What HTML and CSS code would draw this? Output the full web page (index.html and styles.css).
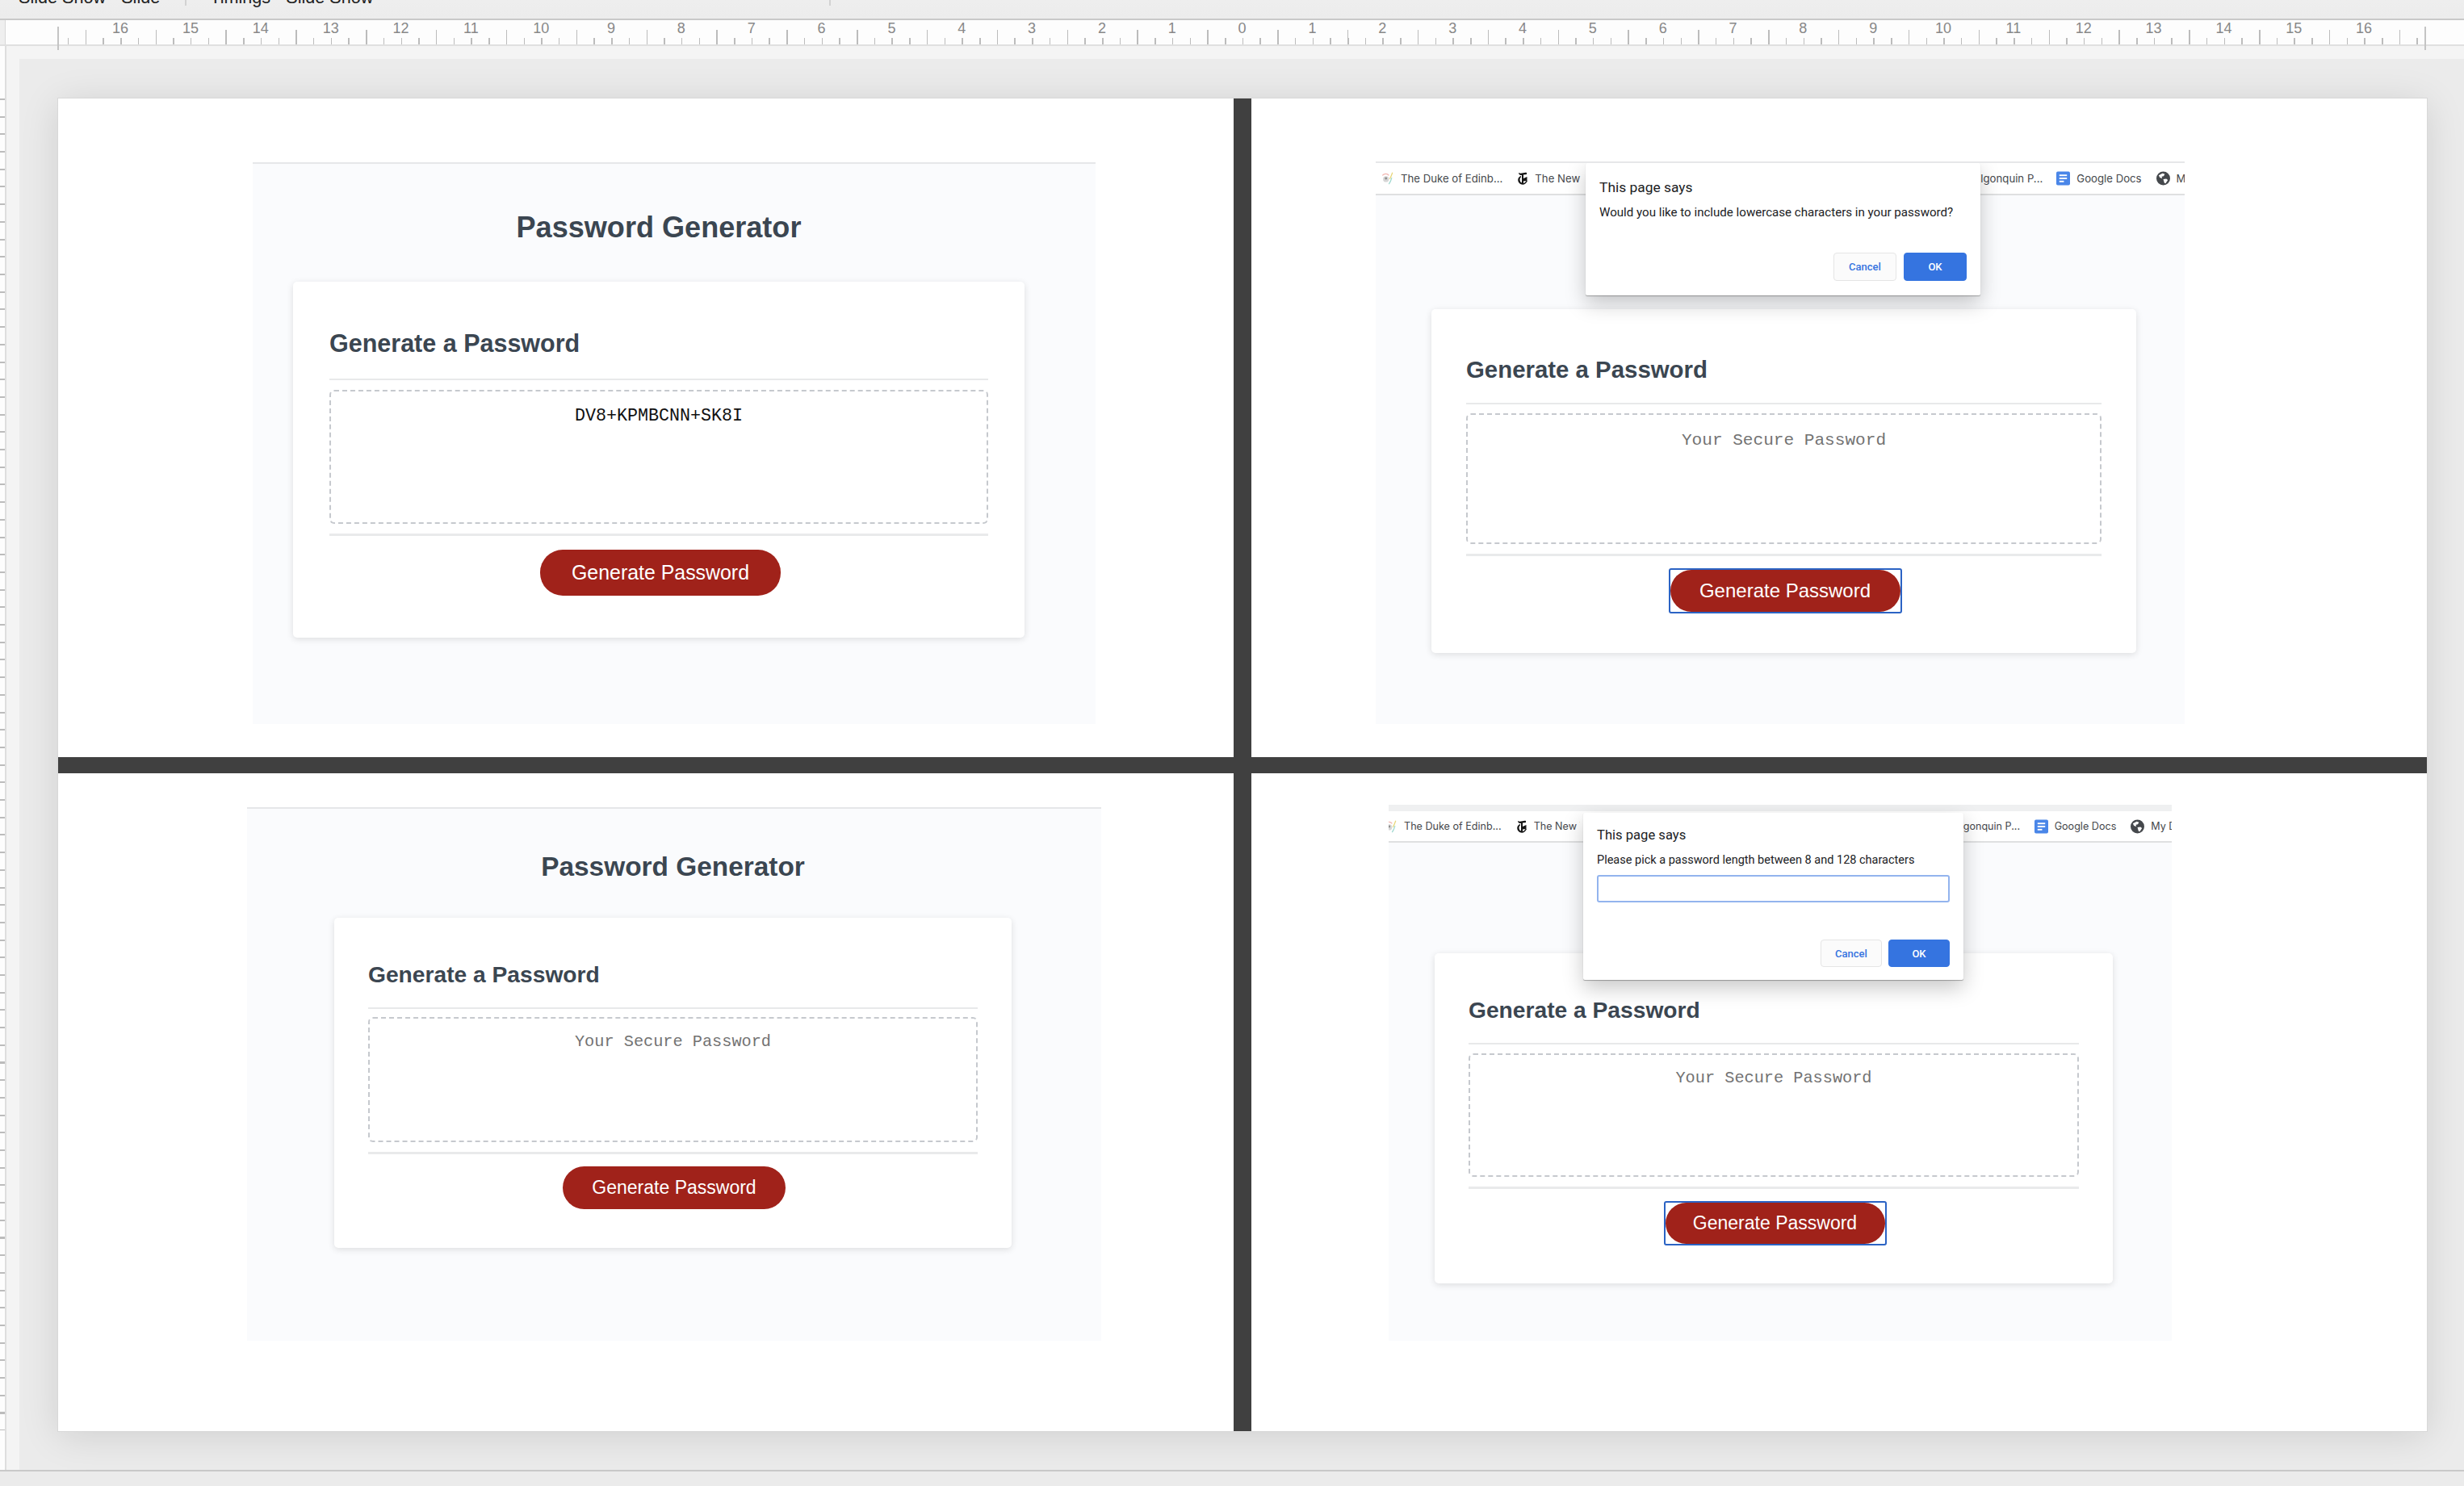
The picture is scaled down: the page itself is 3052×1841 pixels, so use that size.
FILE: index.html
```html
<!DOCTYPE html>
<html lang="en">
<head>
    <meta charset="UTF-8">
    <meta name="viewport" content="width=device-width, initial-scale=1.0">
    <title>Slide Editor</title>

    <link rel="stylesheet" href="styles.css">
</head>
<body>

    <svg class="icon-defs" aria-hidden="true">
        <symbol id="icon-peacock" viewBox="0 0 16 20">
            <path d="M1 6 C4 3 8 3 10 6" fill="none" stroke="#f2b6b0" stroke-width="1.4"/>
            <path d="M11 11 C13 8 14 5 15 2" fill="none" stroke="#e8d77c" stroke-width="1.4"/>
            <path d="M10 18 C12 15 13 13 14 9" fill="none" stroke="#9fd8cf" stroke-width="1.4"/>
            <circle cx="6" cy="11" r="4" fill="#d6d6d6"/>
            <circle cx="6" cy="10" r="1.6" fill="#8d8d8d"/>
        </symbol>
        <symbol id="icon-nyt" viewBox="0 0 14 18">
            <path d="M2 2 C5 4 9 1 12 2 L12 4 L8 4.5 L8 15 L6 15 L6 5 C4 5 2 4.5 2 2 Z" fill="#151515"/>
            <path d="M5 6 C1 7 0 12 3 15 C6 18 11 17 13 12 L11.5 12 C10 15 7 15.5 5 14 C3 12 3.2 8.5 5 7.5 Z" fill="#151515"/>
            <path d="M8 9 L12.5 7 L12.5 12 L8 12.5 Z" fill="#151515"/>
        </symbol>
        <symbol id="icon-docs" viewBox="0 0 18 18">
            <rect width="18" height="18" rx="2" fill="#4a86e8"/>
            <rect x="4" y="4" width="10" height="2" fill="#fff"/>
            <rect x="4" y="8" width="10" height="2" fill="#fff"/>
            <rect x="4" y="12" width="6" height="2" fill="#fff"/>
        </symbol>
        <symbol id="icon-globe" viewBox="0 0 18 18">
            <circle cx="9" cy="9" r="9" fill="#45484c"/>
            <path d="M3 5 L8 2.5 L11 3.5 L9.5 6 L7 6.5 L7.5 9 L4.5 8 Z" fill="#fff"/>
            <path d="M9 10 L13 9.5 L15 11 L12 15.5 L10.5 15 Z" fill="#fff"/>
        </symbol>
    </svg>

    <div class="toolbar">
        <span class="toolbar-item">Slide Show - Slide</span>
        <span class="toolbar-sep"></span>
        <span class="toolbar-item">Timings - Slide Show</span>
        <span class="toolbar-sep toolbar-sep-far"></span>
    </div>

    <div class="top-ruler">
        <div class="ruler-corner"></div>
        <div class="ruler-scale">
            <span class="ruler-mark ruler-mark-start"></span>
            <span class="ruler-num">16</span><span class="ruler-num">15</span><span class="ruler-num">14</span>
            <span class="ruler-num">13</span><span class="ruler-num">12</span><span class="ruler-num">11</span>
            <span class="ruler-num">10</span><span class="ruler-num">9</span><span class="ruler-num">8</span>
            <span class="ruler-num">7</span><span class="ruler-num">6</span><span class="ruler-num">5</span>
            <span class="ruler-num">4</span><span class="ruler-num">3</span><span class="ruler-num">2</span>
            <span class="ruler-num">1</span><span class="ruler-num">0</span><span class="ruler-num">1</span>
            <span class="ruler-num">2</span><span class="ruler-num">3</span><span class="ruler-num">4</span>
            <span class="ruler-num">5</span><span class="ruler-num">6</span><span class="ruler-num">7</span>
            <span class="ruler-num">8</span><span class="ruler-num">9</span><span class="ruler-num">10</span>
            <span class="ruler-num">11</span><span class="ruler-num">12</span><span class="ruler-num">13</span>
            <span class="ruler-num">14</span><span class="ruler-num">15</span><span class="ruler-num">16</span>
            <span class="ruler-mark ruler-mark-end"></span>
        </div>
    </div>

    <div class="workspace">
        <div class="side-ruler">
            <div class="side-ticks"></div>
        </div>
        <div class="side-strip">
            <div class="canvas">
                <div class="slide">

                    <!-- top left: finished password -->
                    <div class="slide-cell">
                        <div class="panel shot-one">
                            <div class="panel-main">
                                <h1 class="panel-title">Password Generator</h1>
                                <div class="card">
                                    <div class="card-head"><h2 class="card-title">Generate a Password</h2></div>
                                    <div class="output output-filled">DV8+KPMBCNN+SK8I</div>
                                    <div class="card-foot">
                                        <button class="btn">Generate Password</button>
                                    </div>
                                </div>
                            </div>
                        </div>
                    </div>

                    <!-- top right: confirm dialog -->
                    <div class="slide-cell">
                        <div class="panel shot-two">
                            <div class="bookmarks">
                                <svg class="bm-icon bm-peacock"><use href="#icon-peacock"/></svg>
                                <span class="bm-text">The Duke of Edinb...</span>
                                <svg class="bm-icon bm-nyt"><use href="#icon-nyt"/></svg>
                                <span class="bm-text bm-new">The New York Times</span>
                                <span class="bm-text bm-algonquin">lgonquin P...</span>
                                <svg class="bm-icon bm-docs"><use href="#icon-docs"/></svg>
                                <span class="bm-text">Google Docs</span>
                                <svg class="bm-icon bm-globe"><use href="#icon-globe"/></svg>
                                <span class="bm-text">My Drive</span>
                            </div>
                            <div class="panel-main">
                                <div class="card">
                                    <div class="card-head"><h2 class="card-title">Generate a Password</h2></div>
                                    <div class="output">Your Secure Password</div>
                                    <div class="card-foot">
                                        <span class="btn-focus"><button class="btn">Generate Password</button></span>
                                    </div>
                                </div>
                            </div>
                            <div class="dialog">
                                <div class="dialog-title">This page says</div>
                                <div class="dialog-msg">Would you like to include lowercase characters in your password?</div>
                                <div class="dialog-actions">
                                    <button class="dialog-btn">Cancel</button>
                                    <button class="dialog-btn dialog-btn-ok">OK</button>
                                </div>
                            </div>
                        </div>
                    </div>

                    <!-- bottom left: starting state -->
                    <div class="slide-cell">
                        <div class="panel shot-three">
                            <div class="panel-main">
                                <h1 class="panel-title">Password Generator</h1>
                                <div class="card">
                                    <div class="card-head"><h2 class="card-title">Generate a Password</h2></div>
                                    <div class="output">Your Secure Password</div>
                                    <div class="card-foot">
                                        <button class="btn">Generate Password</button>
                                    </div>
                                </div>
                            </div>
                        </div>
                    </div>

                    <!-- bottom right: prompt dialog -->
                    <div class="slide-cell">
                        <div class="panel shot-four">
                            <div class="tab-strip"></div>
                            <div class="bookmarks">
                                <svg class="bm-icon bm-peacock"><use href="#icon-peacock"/></svg>
                                <span class="bm-text">The Duke of Edinb...</span>
                                <svg class="bm-icon bm-nyt"><use href="#icon-nyt"/></svg>
                                <span class="bm-text bm-new">The New York Times</span>
                                <span class="bm-text bm-algonquin">lgonquin P...</span>
                                <svg class="bm-icon bm-docs"><use href="#icon-docs"/></svg>
                                <span class="bm-text">Google Docs</span>
                                <svg class="bm-icon bm-globe"><use href="#icon-globe"/></svg>
                                <span class="bm-text">My Drive</span>
                            </div>
                            <div class="panel-main">
                                <div class="card">
                                    <div class="card-head"><h2 class="card-title">Generate a Password</h2></div>
                                    <div class="output">Your Secure Password</div>
                                    <div class="card-foot">
                                        <span class="btn-focus"><button class="btn">Generate Password</button></span>
                                    </div>
                                </div>
                            </div>
                            <div class="dialog">
                                <div class="dialog-title">This page says</div>
                                <div class="dialog-msg">Please pick a password length between 8 and 128 characters</div>
                                <div class="dialog-input"></div>
                                <div class="dialog-actions">
                                    <button class="dialog-btn">Cancel</button>
                                    <button class="dialog-btn dialog-btn-ok">OK</button>
                                </div>
                            </div>
                        </div>
                    </div>

                </div>
            </div>
        </div>
    </div>

    <div class="status-bar"></div>

</body>
</html>
```

FILE: styles.css
```css
* {
    box-sizing: border-box;
}

html, body {
    margin: 0;
    height: 1841px;
    overflow: hidden;
}

body {
    font-family: "Liberation Sans", Arial, sans-serif;
    background-color: #ebebeb;
    display: flex;
    flex-direction: column;
}

.icon-defs {
    position: absolute;
    width: 0;
    height: 0;
}

/* app chrome */
.toolbar {
    height: 25px;
    flex: none;
    display: flex;
    align-items: flex-start;
    padding-left: 23px;
    background: linear-gradient(#eeeeee, #ececec);
    border-bottom: 2px solid #c9c9c9;
    overflow: hidden;
}

.toolbar-item {
    font-size: 21.6px;
    line-height: 24px;
    margin-top: -15px;
    color: #222;
    white-space: pre;
}

.toolbar-sep {
    width: 2px;
    height: 7px;
    margin: 0 29px 0 31px;
    background-color: #d2d2d2;
}

.toolbar-sep-far {
    margin-left: 565px;
}

.top-ruler {
    height: 32px;
    flex: none;
    display: flex;
    background-color: #fdfdfd;
    border-bottom: 2px solid #e0e0e0;
}

.ruler-corner {
    width: 7px;
    flex: none;
    background-color: #efefef;
    border-right: 1px solid #d8d8d8;
}

.ruler-scale {
    position: relative;
    width: 2915px;
    margin-left: 77px;
    padding-left: 21.7125px;
    display: flex;
    background:
        repeating-linear-gradient(to right, #bcbcbc 0, #bcbcbc 1.5px, transparent 1.5px, transparent 21.7125px) bottom / 100% 8px no-repeat,
        repeating-linear-gradient(to right, transparent 0, transparent 21.7125px, #bcbcbc 21.7125px, #bcbcbc 23.2px, transparent 23.2px, transparent 86.85px) bottom / 100% 18px no-repeat;
}

.ruler-num {
    width: 86.85px;
    flex: none;
    text-align: center;
    font-size: 18px;
    line-height: 20px;
    color: #888;
}

.ruler-mark {
    position: absolute;
    top: 8px;
    width: 1.5px;
    height: 29px;
    background-color: #c4c4c4;
}

.ruler-mark-start {
    left: -13px;
}

.ruler-mark-end {
    left: 2919px;
}

.workspace {
    flex: none;
    height: 1766px;
    display: flex;
    border-bottom: 2px solid #c9c9c9;
}

.side-ruler {
    width: 8px;
    flex: none;
    padding-top: 65px;
    background-color: #fdfdfd;
    border-right: 2px solid #dedede;
}

.side-ticks {
    width: 6px;
    height: 1650px;
    background: repeating-linear-gradient(to bottom, #bcbcbc 0, #bcbcbc 2px, transparent 2px, transparent 21.7px);
}

.side-strip {
    flex: 1;
    padding: 16px 0 0 16px;
    background-color: #f4f4f4;
}

.canvas {
    height: 100%;
    padding: 49px 0 0 48px;
    background-color: #ebebeb;
}

.slide {
    width: 2934px;
    height: 1651px;
    display: grid;
    grid-template-columns: 1456px 1456px;
    grid-template-rows: 816px 815px;
    gap: 20px 22px;
    background-color: #404040;
    box-shadow: 0 0 0 1px #d8d8d8, 0 6px 45px rgba(0, 0, 0, 0.12);
}

.slide-cell {
    background-color: #fff;
    overflow: hidden;
}

/* each screenshot was pasted at its own scale */
.shot-one {
    --panel-left: 241px;
    --panel-top: 79px;
    --panel-w: 1044px;
    --panel-h: 696px;
    --main-left: 50px;
    --main-w: 906px;
    --title-h: 146px;
    --title-pad: 12px;
    --title-size: 36.1px;
    --pad: 45px;
    --head-h: 122px;
    --head-pad: 33px;
    --h2-size: 30.5px;
    --gap: 12px;
    --out-h: 166px;
    --out-size: 21.7px;
    --out-pad: 17px;
    --foot-pad: 17px;
    --shift: 4px;
    --btn-w: 298px;
    --btn-h: 57px;
    --btn-size: 24.9px;
    --card-h: 441px;
}

.shot-two {
    --panel-left: 154px;
    --panel-top: 78px;
    --panel-w: 1002px;
    --panel-h: 697px;
    --main-left: 69px;
    --main-w: 873px;
    --main-top: 141px;
    --pad: 43px;
    --head-h: 118px;
    --head-pad: 34px;
    --h2-size: 29.4px;
    --gap: 11px;
    --out-h: 162px;
    --out-size: 21.1px;
    --out-pad: 17px;
    --foot-pad: 15px;
    --shift: 3px;
    --btn-w: 289px;
    --btn-h: 56px;
    --btn-size: 24px;
    --card-h: 426px;
    --bm-size: 13.2px;
    --bm-start: 6px;
    --bm-gap: 18px;
    --bm-new-w: 60px;
    --bm-algonquin-left: 492px;
    --bm-algonquin-w: 76px;
    --dialog-left: 260px;
    --dialog-top: 0;
    --dialog-w: 489px;
    --dialog-h: 164px;
    --dialog-gap: 9px;
    --dialog-pad-top: 18px;
    --dialog-pad-bottom: 18px;
    --dialog-title: 17.4px;
    --dialog-msg: 15.1px;
    --dialog-btn-w: 78px;
    --dialog-btn-h: 35px;
}

.shot-three {
    --panel-left: 234px;
    --panel-top: 42px;
    --panel-w: 1058px;
    --panel-h: 661px;
    --main-left: 108px;
    --main-w: 839px;
    --title-h: 135px;
    --title-pad: 8px;
    --title-size: 33.4px;
    --pad: 42px;
    --head-h: 113px;
    --head-pad: 30px;
    --h2-size: 28.2px;
    --gap: 10px;
    --out-h: 155px;
    --out-size: 20.25px;
    --out-pad: 15px;
    --foot-pad: 15px;
    --shift: 3px;
    --btn-w: 276px;
    --btn-h: 53px;
    --btn-size: 23px;
    --card-h: 409px;
}

.shot-four {
    --panel-left: 170px;
    --panel-top: 39px;
    --panel-w: 970px;
    --panel-h: 664px;
    --main-left: 57px;
    --main-w: 840px;
    --main-top: 137px;
    --pad: 42px;
    --head-h: 113px;
    --head-pad: 30px;
    --h2-size: 28.2px;
    --gap: 11px;
    --out-h: 153px;
    --out-size: 20.25px;
    --out-pad: 15px;
    --foot-pad: 15px;
    --shift: 3px;
    --btn-w: 276px;
    --btn-h: 55px;
    --btn-size: 23px;
    --card-h: 409px;
    --bm-size: 12.6px;
    --bm-start: -6px;
    --bm-gap: 18px;
    --bm-new-w: 57px;
    --bm-algonquin-left: 472px;
    --bm-algonquin-w: 73px;
    --dialog-left: 241px;
    --dialog-top: 10px;
    --dialog-w: 471px;
    --dialog-h: 207px;
    --dialog-gap: 8px;
    --dialog-pad-top: 16px;
    --dialog-pad-bottom: 16px;
    --dialog-title: 16.6px;
    --dialog-msg: 14.5px;
    --dialog-btn-w: 76px;
    --dialog-btn-h: 34px;
}

/* the generator page */
.panel {
    position: relative;
    width: var(--panel-w);
    height: var(--panel-h);
    margin: var(--panel-top) 0 0 var(--panel-left);
    background-color: #fafbfd;
    border-top: 2px solid #e6e7e9;
    overflow: hidden;
}

.shot-four {
    border-top: 0;
}

.panel-main {
    width: var(--main-w);
    margin: var(--main-top, 0) 0 0 var(--main-left);
}

.panel-title {
    height: var(--title-h);
    margin: 0;
    padding-top: var(--title-pad);
    display: flex;
    align-items: center;
    justify-content: center;
    font-size: var(--title-size);
    font-weight: bold;
    color: #3b4651;
}

.card {
    height: var(--card-h);
    padding: 0 var(--pad);
    background-color: #fff;
    border-radius: 5px;
    box-shadow: 0 2px 8px rgba(0, 0, 0, 0.12);
}

.card-head {
    height: var(--head-h);
    padding-top: var(--head-pad);
    display: flex;
    align-items: center;
    border-bottom: 2px solid #e8e9ea;
}

.card-title {
    margin: 0;
    font-size: var(--h2-size);
    font-weight: bold;
    color: #3b4651;
}

.output {
    height: var(--out-h);
    margin-top: var(--gap);
    padding-top: var(--out-pad);
    border: 2px dashed #c6c9ce;
    border-radius: 6px;
    text-align: center;
    font-family: "Liberation Mono", "Courier New", monospace;
    font-size: var(--out-size);
    line-height: 28px;
    color: #737373;
}

.output-filled {
    color: #111;
}

.card-foot {
    margin-top: 12px;
    padding: var(--foot-pad) 0 0 var(--shift);
    display: flex;
    justify-content: center;
    border-top: 3px solid #e9eaeb;
}

.btn {
    width: var(--btn-w);
    height: var(--btn-h);
    padding: 0;
    border: 0;
    border-radius: 28px;
    background-color: #a0221a;
    font-family: "Liberation Sans", Arial, sans-serif;
    font-size: var(--btn-size);
    color: #fff;
}

.btn-focus {
    display: flex;
    border: 2px solid #2b63c4;
    border-radius: 3px;
    background-color: #fff;
}

.btn-focus .btn {
    height: calc(var(--btn-h) - 4px);
    width: calc(var(--btn-w) - 4px);
}

/* browser chrome above two of the pages */
.tab-strip {
    height: 8px;
    background-color: #eff0f1;
}

.bookmarks {
    height: 40px;
    display: flex;
    align-items: center;
    background-color: #fff;
    border-bottom: 2px solid #dfe0e1;
    white-space: nowrap;
    overflow: hidden;
    font-family: Inter, "Liberation Sans", sans-serif;
    font-size: var(--bm-size);
    color: #45484c;
}

.shot-four .bookmarks {
    height: 39px;
}

.bm-icon {
    flex: none;
    width: 17px;
    height: 18px;
    margin-right: 8px;
}

.bm-peacock {
    margin-left: var(--bm-start);
}

.bm-text {
    flex: none;
    margin-right: var(--bm-gap);
}

.bm-nyt {
    width: 14px;
}

/* the dialog sits on top of the middle bookmarks */
.bm-new {
    width: var(--bm-new-w);
    margin-right: 0;
    overflow: hidden;
}

.bm-algonquin {
    width: var(--bm-algonquin-w);
    margin-left: var(--bm-algonquin-left);
    text-align: right;
}

/* native alert box, floats over the page */
.dialog {
    position: absolute;
    left: var(--dialog-left);
    top: var(--dialog-top);
    width: var(--dialog-w);
    height: var(--dialog-h);
    padding: var(--dialog-pad-top) 17px var(--dialog-pad-bottom) 17px;
    display: flex;
    flex-direction: column;
    background-color: #fff;
    border-radius: 2px;
    box-shadow: 0 1px 1px rgba(0, 0, 0, 0.3), 0 10px 26px rgba(0, 0, 0, 0.22);
    font-family: Roboto, "Liberation Sans", sans-serif;
    color: #202124;
}

.dialog-title {
    font-size: var(--dialog-title);
    line-height: 24px;
}

.dialog-msg {
    margin-top: 10px;
    font-size: var(--dialog-msg);
    line-height: 18px;
}

.dialog-input {
    height: 34px;
    margin-top: 9px;
    border: 2px solid #93b4ee;
    border-radius: 3px;
}

.dialog-actions {
    margin-top: auto;
    display: flex;
    justify-content: flex-end;
    gap: var(--dialog-gap);
}

.dialog-btn {
    width: var(--dialog-btn-w);
    height: var(--dialog-btn-h);
    padding: 0;
    border: 1px solid #e5e5e5;
    border-radius: 4px;
    background-color: #fbfbfb;
    font-family: Roboto, "Liberation Sans", sans-serif;
    font-size: 13px;
    font-weight: 500;
    color: #3574e0;
}

.dialog-btn-ok {
    border-color: #3574e0;
    background-color: #3574e0;
    color: #fff;
}

.status-bar {
    flex: 1;
    background-color: #ebebeb;
}
```
